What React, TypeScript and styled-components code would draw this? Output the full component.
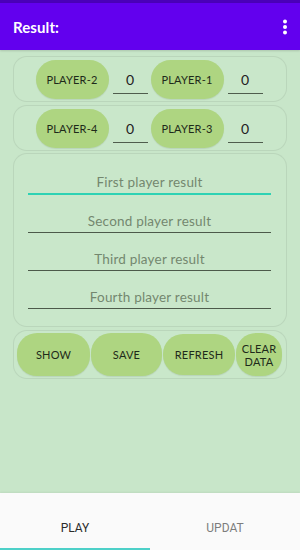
import React from "react";
import styled, { createGlobalStyle } from "styled-components";

const GlobalStyle = createGlobalStyle`
  html, body {
    margin: 0;
    padding: 0;
    background: #c8e6c9;
  }
  * {
    box-sizing: border-box;
  }
`;

const Screen = styled.div`
  width: 300px;
  height: 550px;
  display: flex;
  flex-direction: column;
  background: #c8e6c9;
  font-family: Lato, "Noto Sans", sans-serif;
  overflow: hidden;
`;

const StatusStrip = styled.div`
  height: 3px;
  background: #4a00b8;
`;

const AppBar = styled.header`
  height: 47px;
  background: #6200ee;
  display: flex;
  align-items: center;
  justify-content: space-between;
  padding: 0 12px 0 13px;
  box-shadow: 0 1px 2px rgba(0, 0, 0, 0.15);
`;

const Title = styled.span`
  color: #fff;
  font-size: 15px;
  font-weight: 700;
  letter-spacing: 0.1px;
`;

const Content = styled.main`
  flex: 1;
  display: flex;
  flex-direction: column;
  padding: 6px 13px 0 13px;
`;

const Card = styled.section<{ $pad?: string; $top?: number }>`
  border: 1px solid rgba(0, 0, 0, 0.07);
  border-radius: 14px;
  background: #c9e7ca;
  padding: ${(p) => p.$pad || "3px 0 2px"};
  margin-top: ${(p) => p.$top || 0}px;
`;

const PlayerRow = styled.div`
  display: flex;
  align-items: center;
  justify-content: center;
  padding-left: 1px;
`;

const Pill = styled.button<{ $w: number; $h?: number }>`
  width: ${(p) => p.$w}px;
  height: ${(p) => p.$h || 39}px;
  border: none;
  border-radius: 20px;
  background: #aed581;
  color: #1e2a1a;
  font-family: Lato, "Noto Sans", sans-serif;
  font-size: 11px;
  letter-spacing: 0.2px;
  text-transform: uppercase;
  padding: 0;
  line-height: 13px;
  box-shadow: 0 1px 1px rgba(0, 0, 0, 0.08);
`;

const ScoreField = styled.div`
  width: 35px;
  margin: 2px 3px 0 4px;
  height: 26px;
  border-bottom: 1px solid #4f5d4d;
  text-align: center;
  font-size: 14px;
  color: #222;
  line-height: 24px;
`;

const ResultList = styled.div`
  display: flex;
  flex-direction: column;
  padding: 17px 15px 17px 14px;
  gap: 14px;
`;

const ResultField = styled.div<{ $focus?: boolean }>`
  height: 24px;
  display: flex;
  align-items: center;
  justify-content: center;
  font-size: 13.5px;
  color: #74876f;
  letter-spacing: 0.2px;
  border-bottom: ${(p) => (p.$focus ? "2px solid #2ed2b4" : "1px solid #4c5a4a")};
`;

const ActionRow = styled.div`
  display: flex;
  align-items: center;
  gap: 1px;
  padding-left: 3px;
`;

const TabBar = styled.nav`
  height: 57px;
  background: #fafafa;
  display: flex;
  box-shadow: 0 -1px 2px rgba(0, 0, 0, 0.06);
`;

const Tab = styled.div<{ $active?: boolean }>`
  flex: 1;
  display: flex;
  align-items: center;
  justify-content: center;
  font-family: Roboto, "Liberation Sans", sans-serif;
  font-size: 12px;
  color: ${(p) => (p.$active ? "#2b2b2b" : "#7d7d7d")};
  border-bottom: 2px solid ${(p) => (p.$active ? "#4dd0c8" : "transparent")};
  padding-top: 15px;
`;

const players = [
  ["PLAYER-2", "PLAYER-1"],
  ["PLAYER-4", "PLAYER-3"],
];

const results = [
  "First player result",
  "Second player result",
  "Third player result",
  "Fourth player result",
];

const MoreIcon = () => (
  <svg width="6" height="16" viewBox="0 0 6 16">
    <circle cx="3" cy="2.5" r="2" fill="#fff" />
    <circle cx="3" cy="8" r="2" fill="#fff" />
    <circle cx="3" cy="13.5" r="2" fill="#fff" />
  </svg>
);

const App = () => {
  return (
    <Screen>
      <GlobalStyle />
      <StatusStrip />
      <AppBar>
        <Title>Result:</Title>
        <MoreIcon />
      </AppBar>
      <Content>
        {players.map((pair, i) => (
          <Card key={i} $top={i === 0 ? 0 : 3}>
            <PlayerRow>
              {pair.map((name) => (
                <React.Fragment key={name}>
                  <Pill $w={73}>{name}</Pill>
                  <ScoreField>0</ScoreField>
                </React.Fragment>
              ))}
            </PlayerRow>
          </Card>
        ))}
        <Card $pad="0" $top={2}>
          <ResultList>
            {results.map((r, i) => (
              <ResultField key={r} $focus={i === 0}>
                {r}
              </ResultField>
            ))}
          </ResultList>
        </Card>
        <Card $pad="2px 0" $top={3}>
          <ActionRow>
            <Pill $w={73} $h={43}>Show</Pill>
            <Pill $w={71} $h={43}>Save</Pill>
            <Pill $w={72} $h={41}>Refresh</Pill>
            <Pill $w={46} $h={43}>
              Clear
              <br />
              Data
            </Pill>
          </ActionRow>
        </Card>
      </Content>
      <TabBar>
        <Tab $active>PLAY</Tab>
        <Tab>UPDAT</Tab>
      </TabBar>
    </Screen>
  );
};

export default App;
